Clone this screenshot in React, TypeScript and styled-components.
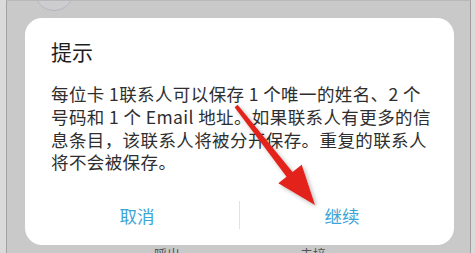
import styled, { createGlobalStyle } from "styled-components";

const GlobalStyle = createGlobalStyle`
  html, body {
    margin: 0;
    padding: 0;
    background: #d8d8d8;
    overflow: hidden;
  }
`;

const Frame = styled.div`
  width: 475px;
  height: 253px;
  display: flex;
  background: #dadada;
  overflow: hidden;
  position: relative;
  font-family: "Noto Sans CJK SC", "Noto Sans", sans-serif;
`;

const Screen = styled.div`
  width: 465px;
  margin-left: 6px;
  height: 253px;
  background: #c9c9c9;
  border-left: 1px solid #a2a2a2;
  border-right: 1px solid #9c9c9c;
  border-top: 1px solid #b8b8b8;
  box-sizing: border-box;
  display: flex;
  flex-direction: column;
  overflow: hidden;
`;

const TopStrip = styled.div`
  height: 17px;
  padding-left: 27px;
  flex-shrink: 0;
`;

const Avatar = styled.div`
  width: 38px;
  height: 38px;
  margin-top: -30px;
  border-radius: 50%;
  border: 1.5px solid #b3b7c4;
  background: #cdcdcf;
`;

const Card = styled.div`
  margin-left: 18px;
  width: 429px;
  height: 227px;
  flex-shrink: 0;
  background: #ffffff;
  border-radius: 17px;
  padding: 19px 26px 9px 26px;
  box-sizing: border-box;
  display: flex;
  flex-direction: column;
`;

const Title = styled.div`
  font-size: 21px;
  line-height: 28px;
  color: #1e1e1e;
`;

const Body = styled.div`
  margin-top: 18px;
  font-size: 17.5px;
  line-height: 22.8px;
  letter-spacing: 0.4px;
  color: #2e2e2e;
`;

const Line = styled.span`
  display: block;
  white-space: nowrap;
`;

const ButtonRow = styled.div`
  margin: auto -16px 0 -16px;
  height: 42px;
  display: flex;
  align-items: center;
`;

const ActionButton = styled.button`
  flex: 1;
  height: 42px;
  border: none;
  background: transparent;
  padding: 0;
  font-family: inherit;
  font-size: 17.5px;
  color: #3aa5d6;
`;

const Divider = styled.div`
  width: 1px;
  height: 28px;
  background: #e2e2e2;
`;

const TabRow = styled.div`
  display: flex;
  margin-top: 1px;
  padding-left: 147px;
  gap: 120px;
  font-size: 13px;
  line-height: 16px;
  color: #555;
`;

const TabLabel = styled.span`
  white-space: nowrap;
`;

const Pointer = styled.svg`
  position: absolute;
  left: 0;
  top: 0;
  pointer-events: none;
`;

const RedArrow = () => (
  <Pointer width="475" height="253" viewBox="0 0 475 253">
    <defs>
      <filter id="arrowShadow" x="-20%" y="-20%" width="140%" height="140%">
        <feDropShadow dx="2" dy="2" stdDeviation="2" floodColor="#000" floodOpacity="0.28" />
      </filter>
    </defs>
    <g filter="url(#arrowShadow)" fill="#e3211b">
      <polygon points="234.6,107.2 237.6,104.8 295,175 289,180" />
      <polygon points="315,205 278.3,183.3 301.7,164.7" />
    </g>
  </Pointer>
);

export default function App() {
  return (
    <>
      <GlobalStyle />
      <Frame>
        <Screen>
          <TopStrip>
            <Avatar />
          </TopStrip>
          <Card>
            <Title>提示</Title>
            <Body>
              <Line>每位卡 1联系人可以保存 1 个唯一的姓名、2 个</Line>
              <Line>号码和 1 个 Email 地址。如果联系人有更多的信</Line>
              <Line>息条目，该联系人将被分开保存。重复的联系人</Line>
              <Line>将不会被保存。</Line>
            </Body>
            <ButtonRow>
              <ActionButton>取消</ActionButton>
              <Divider />
              <ActionButton>继续</ActionButton>
            </ButtonRow>
          </Card>
          <TabRow>
            <TabLabel>呼出</TabLabel>
            <TabLabel>未接</TabLabel>
          </TabRow>
        </Screen>
        <RedArrow />
      </Frame>
    </>
  );
}
